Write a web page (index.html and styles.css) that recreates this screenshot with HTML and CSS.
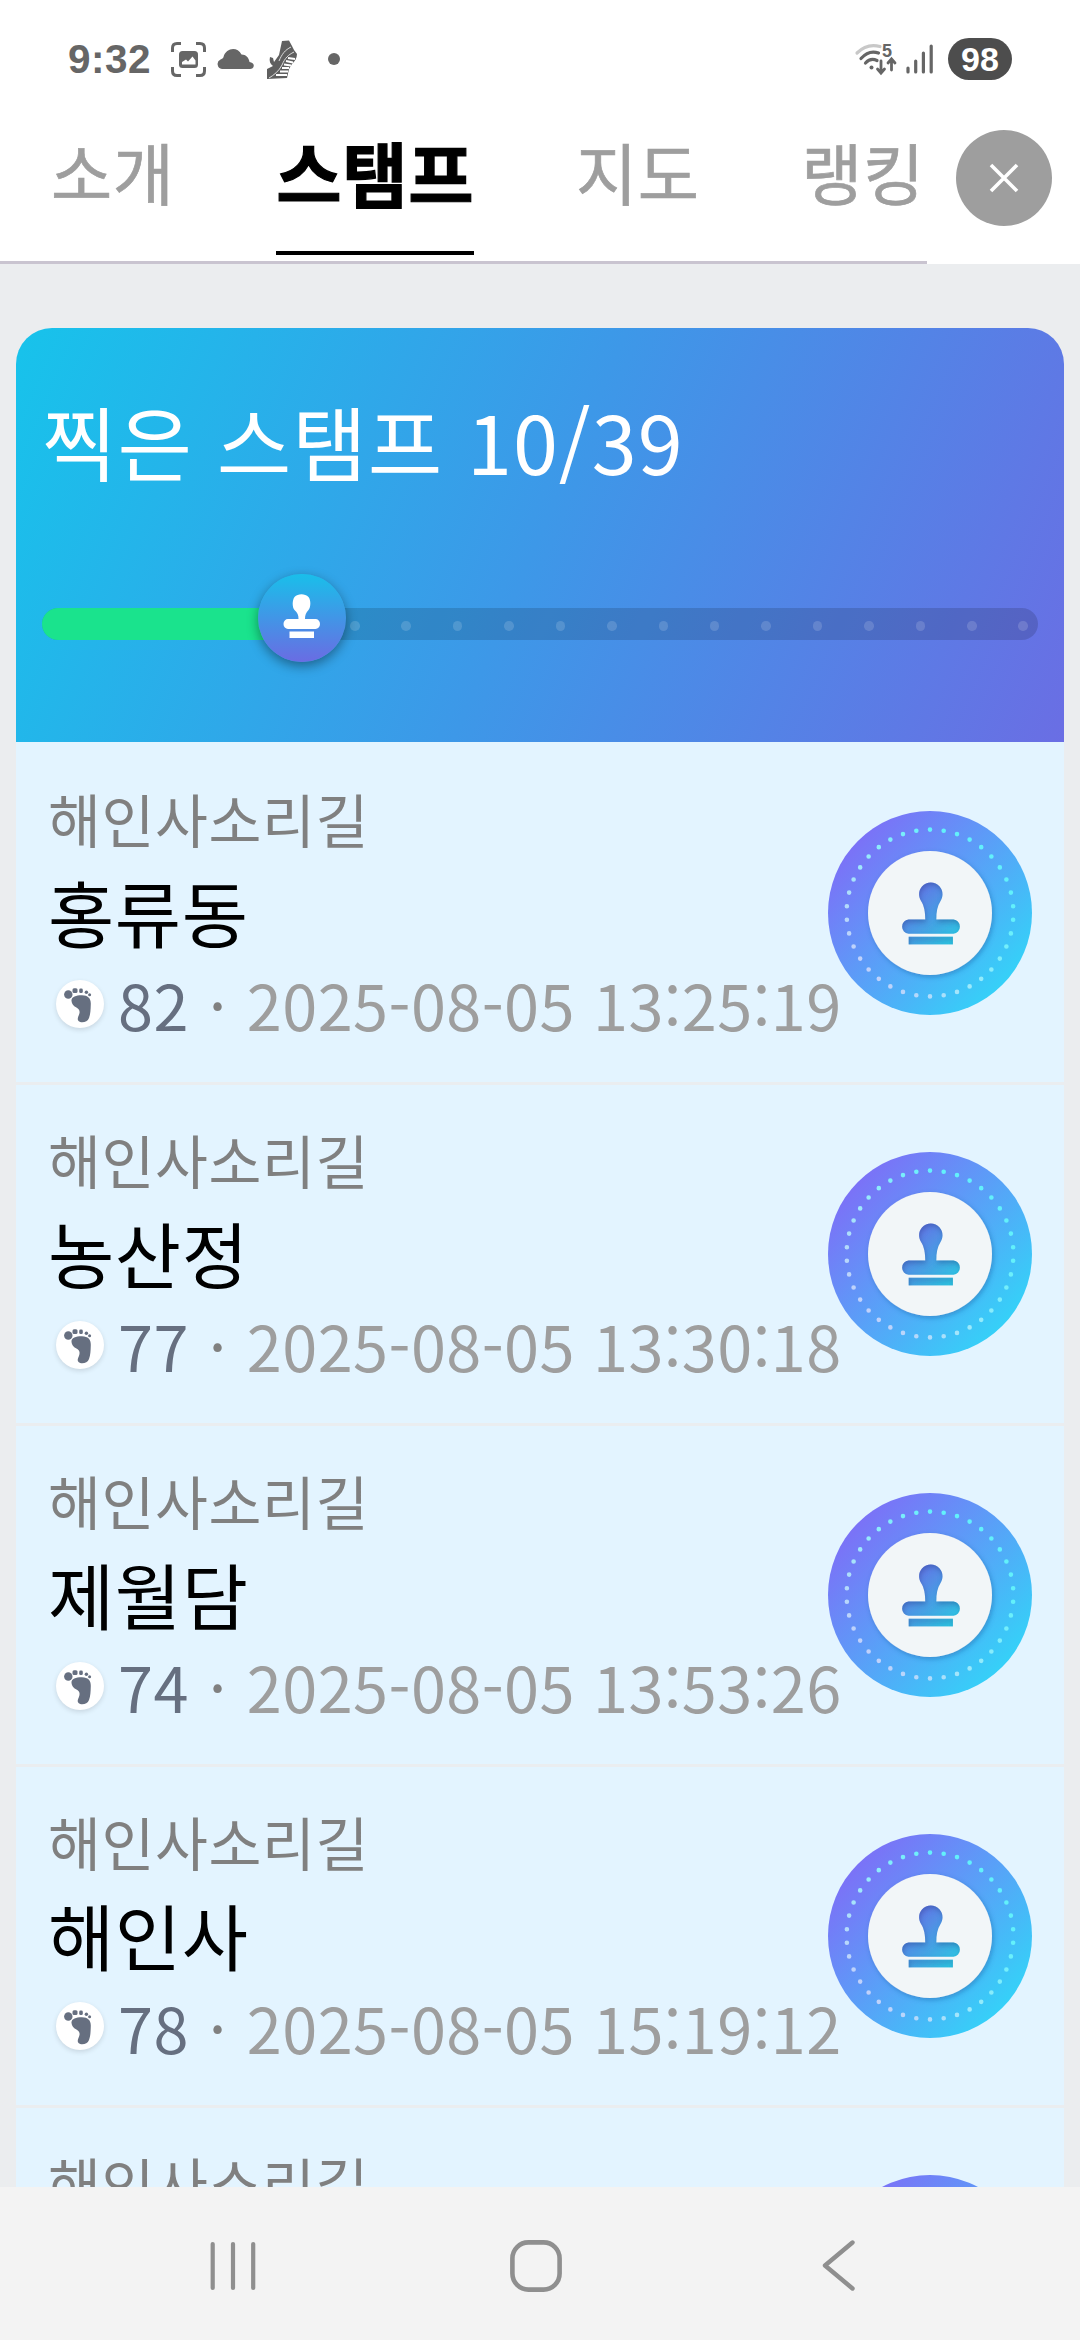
FILE: index.html
```
<!DOCTYPE html>
<html lang="ko">
<head>
<meta charset="UTF-8">
<title>스탬프</title>
<link rel="stylesheet" href="styles.css">
</head>
<body>
<svg class="defs" width="0" height="0">
    <defs>
        <linearGradient id="ring" x1="0.1" y1="0.15" x2="0.85" y2="0.85">
            <stop offset="0" stop-color="#7d6ff7"/>
            <stop offset="1" stop-color="#36d0f8"/>
        </linearGradient>
        <linearGradient id="dots" x1="0.1" y1="0.1" x2="0.7" y2="0.8">
            <stop offset="0" stop-color="#c6cdfb"/>
            <stop offset="0.5" stop-color="#9ceafb"/>
            <stop offset="1" stop-color="#62f1fb"/>
        </linearGradient>
        <linearGradient id="ink" gradientUnits="userSpaceOnUse" x1="82" y1="80" x2="126" y2="128">
            <stop offset="0" stop-color="#6573e6"/>
            <stop offset="1" stop-color="#2fc2e2"/>
        </linearGradient>
        <filter id="discShadow" x="-20%" y="-20%" width="140%" height="140%">
            <feDropShadow dx="1.5" dy="2" stdDeviation="2.5" flood-color="#1c4f96" flood-opacity="0.4"/>
        </filter>
        <filter id="inkShadow" x="-10%" y="-10%" width="120%" height="120%">
            <feOffset in="SourceAlpha" dx="1" dy="3"/>
            <feGaussianBlur stdDeviation="2.5" result="b"/>
            <feComposite in="SourceAlpha" in2="b" operator="out" result="s"/>
            <feFlood flood-color="#1f3f8c" flood-opacity="0.5"/>
            <feComposite in2="s" operator="in" result="c"/>
            <feMerge><feMergeNode in="SourceGraphic"/><feMergeNode in="c"/></feMerge>
        </filter>
    </defs>
    <symbol id="badge" viewBox="0 0 204 204">
        <circle cx="102" cy="102" r="102" fill="url(#ring)"/>
        <circle cx="102" cy="102" r="83.4" fill="none" stroke="url(#dots)" stroke-width="4.6" stroke-linecap="round" pathLength="38" stroke-dasharray="0 1" transform="rotate(-90 102 102)"/>
        <circle cx="102" cy="102" r="62" fill="#f2f6f8" filter="url(#discShadow)"/>
        <g fill="url(#ink)" filter="url(#inkShadow)">
            <path d="M97.3 109C97.3 101 96.2 95 93.2 90.3C90 85 90.6 79.4 94 75.5C98.6 70.2 107 70.2 111.6 75.5C115 79.4 115.6 85 112.4 90.3C109.4 95 108.3 101 108.3 108.5H125.5A7.2 7.2 0 0 1 125.5 122.8H80.5A7.2 7.2 0 0 1 80.5 108.5H97.3Z"/>
            <rect x="80.7" y="125.7" width="44.2" height="7.7"/>
        </g>
    </symbol>
    <symbol id="foot" viewBox="0 0 48 48">
        <path fill="#666f80" d="M15.5 21C15 16.500 21 15 26 15.200C32 15.500 35 18 34.800 24C34.600 30 34.500 34 33 38C31.500 42.500 25 43.500 22.500 41C20.500 38.500 23 36 23.500 33C24 30 22.500 28.500 20 27.200C17.500 26 15.800 24 15.500 21Z"/>
        <ellipse fill="#666f80" cx="12.300" cy="14.500" rx="4.200" ry="4.300"/>
        <rect fill="#666f80" x="16.500" y="8.300" width="5" height="4.800" rx="1.500"/>
        <rect fill="#666f80" x="23.200" y="8.500" width="3.600" height="4.600" rx="1.400"/>
        <circle fill="#666f80" cx="30.400" cy="12.300" r="1.700"/>
        <circle fill="#666f80" cx="33.600" cy="14.800" r="1.500"/>
    </symbol>
</svg>

<div class="phone">
    <div class="status">
        <span class="time">9:32</span>
        <svg class="ic-capture" width="35" height="35" viewBox="0 0 35 35">
            <path d="M1.500 10V6Q1.500 1.500 6 1.500H10M25 1.500H29Q33.500 1.500 33.500 6V10M33.500 25V29Q33.500 33.500 29 33.500H25M10 33.500H6Q1.500 33.500 1.500 29V25" fill="none" stroke="#666" stroke-width="3"/>
            <rect x="8" y="9" width="19" height="17" rx="3.500" fill="#666"/>
            <path d="M11 22.500V20L15 17.500L17 19.500L21.500 14.500L24.500 18.500V22.500Z" fill="#fff"/>
        </svg>
        <svg class="ic-cloud" width="37" height="20" viewBox="0 0 37 20">
            <path d="M5 20A5 5 0 0 1 3.500 10.500C5 9.500 6 9.500 6.500 8C9-1 20-3 24.500 5.500C29 5.500 32 9 32.500 13C35 13.300 36.800 14.500 36.800 16.800C36.500 19 35 20 33 20Z" fill="#666"/>
        </svg>
        <svg class="ic-shoe" width="32" height="39" viewBox="0 0 32 39">
            <path d="M16 1L23 .5L26 6L28 10L31 14C31 18 29 21 26 24L23 29L21 38L1 39L1 29L7 26C4 24 3 21 4 17L7 18L8 22L13 15Z" fill="#5f5f5f"/>
            <path d="M28 12C22 15 19 18 16 25C13 31 8 35 3 38M25 7C19 10 16 14 13 21" fill="none" stroke="#ddd" stroke-width="1"/>
            <path d="M22 18L29 19M20 21L27 22.500M18 24.500L25 25.500M16 28H23M14 31.500H22M10 35H21" stroke="#fff" stroke-width="1.800"/>
        </svg>
        <span class="more"></span>
        <span class="spacer"></span>
        <svg class="ic-wifi" width="42" height="34" viewBox="0 0 42 34">
            <path d="M2 11Q12 1 25 4.500" fill="none" stroke="#c8c8c8" stroke-width="3.200" stroke-linecap="round"/>
            <path d="M6 16.500Q14 7.500 23.500 11" fill="none" stroke="#666" stroke-width="3.200" stroke-linecap="round"/>
            <path d="M10.500 21Q15.500 15.500 22 18.500" fill="none" stroke="#666" stroke-width="3.200" stroke-linecap="round"/>
            <circle cx="16.500" cy="25.500" r="2" fill="#666"/>
            <path d="M26 19V30M22.500 27L26 31L29.500 27M36.500 28V18M33 21L36.500 17L40 21" fill="none" stroke="#666" stroke-width="2.800" stroke-linecap="round"/>
            <text class="wifi-gen" x="27" y="14.500">5</text>
        </svg>
        <svg class="ic-signal" width="28" height="30" viewBox="0 0 28 30">
            <path d="M2 24V28M9.700 17V28M17.400 9V28M25.200 2V28" stroke="#666" stroke-width="3.200" stroke-linecap="round"/>
        </svg>
        <span class="battery">98</span>
    </div>

    <div class="header">
        <div class="tabs">
            <a class="tab">소개</a>
            <a class="tab active">스탬프</a>
            <a class="tab">지도</a>
            <a class="tab">랭킹</a>
        </div>
        <div class="close">
            <svg width="96" height="96" viewBox="0 0 96 96">
                <circle cx="48" cy="48" r="48" fill="#9e9e9e"/>
                <path d="M35 35L61 61M61 35L35 61" stroke="#fff" stroke-width="3.600"/>
            </svg>
        </div>
    </div>

    <div class="content">
        <div class="summary">
            <div class="summary-title">찍은 스탬프 10/39</div>
            <div class="track">
                <div class="fill"></div>
                <div class="steps">
                    <i></i><i></i><i></i><i></i><i></i><i></i><i></i><i></i><i></i><i></i><i></i><i></i><i></i><i></i>
                </div>
                <div class="knob">
                    <svg width="40" height="50" viewBox="0 0 40 50">
                        <path fill="#fff" d="M16.500 29C16.500 25 15.500 22.500 12.500 20C10 17 10.200 10 12.500 7C16 3.300 23 3.300 26.500 7C29 10 29 17 26.500 20C24 22.500 23 25 23 29H33.500A4.500 5 0 0 1 33.500 39H6A4.500 5 0 0 1 6 29Z"/>
                        <rect x="7.500" y="41.500" width="24.500" height="6.500" fill="#fff"/>
                    </svg>
                </div>
            </div>
        </div>

        <div class="item">
            <div class="info">
                <div class="course">해인사소리길</div>
                <div class="name">홍류동</div>
                <div class="meta"><span class="foot"><svg width="48" height="48"><use href="#foot"/></svg></span><span class="count">82</span><span class="sep">·</span><span class="date">2025-08-05 13:25:19</span></div>
            </div>
            <svg class="badge" width="204" height="204"><use href="#badge"/></svg>
        </div>
        <div class="item">
            <div class="info">
                <div class="course">해인사소리길</div>
                <div class="name">농산정</div>
                <div class="meta"><span class="foot"><svg width="48" height="48"><use href="#foot"/></svg></span><span class="count">77</span><span class="sep">·</span><span class="date">2025-08-05 13:30:18</span></div>
            </div>
            <svg class="badge" width="204" height="204"><use href="#badge"/></svg>
        </div>
        <div class="item">
            <div class="info">
                <div class="course">해인사소리길</div>
                <div class="name">제월담</div>
                <div class="meta"><span class="foot"><svg width="48" height="48"><use href="#foot"/></svg></span><span class="count">74</span><span class="sep">·</span><span class="date">2025-08-05 13:53:26</span></div>
            </div>
            <svg class="badge" width="204" height="204"><use href="#badge"/></svg>
        </div>
        <div class="item">
            <div class="info">
                <div class="course">해인사소리길</div>
                <div class="name">해인사</div>
                <div class="meta"><span class="foot"><svg width="48" height="48"><use href="#foot"/></svg></span><span class="count">78</span><span class="sep">·</span><span class="date">2025-08-05 15:19:12</span></div>
            </div>
            <svg class="badge" width="204" height="204"><use href="#badge"/></svg>
        </div>
        <div class="item">
            <div class="info">
                <div class="course">해인사소리길</div>
            </div>
            <svg class="badge" width="204" height="204"><use href="#badge"/></svg>
        </div>
    </div>

    <div class="navbar">
        <svg width="60" height="60" viewBox="0 0 60 60"><path d="M9.700 8V52M30 8V52M50.200 8V52" stroke="#8f8f8f" stroke-width="4.200" stroke-linecap="round"/></svg>
        <svg width="60" height="60" viewBox="0 0 60 60"><rect x="6.400" y="6.400" width="47.200" height="47.200" rx="16" fill="none" stroke="#8f8f8f" stroke-width="4.600"/></svg>
        <svg width="60" height="60" viewBox="0 0 60 60"><path d="M44.500 7L17 30L44.500 53" transform="translate(0 -.5)" fill="none" stroke="#8f8f8f" stroke-width="4.400" stroke-linecap="round" stroke-linejoin="round"/></svg>
    </div>
</div>
</body>
</html>
```
FILE: styles.css
```
* {
    box-sizing: border-box;
}
body {
    margin: 0;
    background: #ebedef;
    font-family: "Noto Sans CJK KR", "Noto Sans", sans-serif;
    letter-spacing: 0.6px;
}
svg {
    display: block;
    flex: none;
}
.defs {
    position: absolute;
}
.phone {
    width: 1080px;
    height: 2340px;
    display: flex;
    flex-direction: column;
    overflow: hidden;
}

/* status bar */
.status {
    flex: none;
    height: 118px;
    padding: 0 68px;
    display: flex;
    align-items: center;
    background: #fff;
    font-family: "Liberation Sans", Arial, sans-serif;
    font-weight: bold;
    letter-spacing: 0;
}
.time {
    width: 103px;
    font-size: 40.5px;
    line-height: 46px;
    letter-spacing: 0.5px;
    color: #666;
}
.ic-cloud {
    margin-left: 11px;
}
.ic-shoe {
    margin-left: 12px;
}
.more {
    width: 12px;
    height: 12px;
    margin-left: 30px;
    border-radius: 50%;
    background: #666;
}
.spacer {
    flex: 1;
}
.ic-wifi {
    overflow: visible;
}
.wifi-gen {
    font-size: 18px;
    fill: #666;
}
.ic-signal {
    margin: 0 14px 0 9px;
}
.battery {
    width: 64px;
    height: 42px;
    border-radius: 21px;
    background: #4d4d4d;
    color: #fff;
    font-size: 34px;
    line-height: 43px;
    text-align: center;
}

/* tabs */
.header {
    flex: none;
    height: 146px;
    display: flex;
    background: #fff;
}
.tabs {
    width: 927px;
    padding-left: 51px;
    display: flex;
    gap: 101.8px;
    border-bottom: 3px solid #c9c4d0;
}
.tab {
    flex: none;
    height: 137px;
    font-size: 66.5px;
    line-height: 107px;
    color: #9e9e9e;
    white-space: nowrap;
    -webkit-text-stroke: 0.7px;
}
.tab.active {
    font-size: 71px;
    font-weight: bold;
    color: #000;
    border-bottom: 4px solid #000;
    -webkit-text-stroke: 1.2px;
}
.close {
    padding: 12px 0 0 28.5px;
}

/* stamp progress */
.content {
    flex: 1;
    min-height: 0;
    overflow: hidden;
    padding: 64px 16px 0;
}
.summary {
    height: 414px;
    padding: 52px 26px 0;
    border-radius: 36px 36px 0 0;
    background: linear-gradient(113deg, #17c3eb 0%, #3d98e8 50%, #6a6ee4 100%);
}
.summary-title {
    height: 120px;
    font-size: 81px;
    line-height: 120px;
    letter-spacing: 1px;
    color: #fff;
}
.track {
    position: relative;
    width: 996px;
    height: 32px;
    margin-top: 108px;
    border-radius: 16px;
    background: rgba(0, 0, 0, 0.14);
}
.fill {
    width: 260px;
    height: 32px;
    border-radius: 16px 0 0 16px;
    background: #1ae38d;
}
.steps {
    position: absolute;
    left: 308px;
    right: 10px;
    top: 13px;
    display: flex;
    justify-content: space-between;
}
.steps i {
    width: 9.5px;
    height: 9.5px;
    border-radius: 50%;
    background: rgba(255, 255, 255, 0.15);
}
.knob {
    position: absolute;
    left: 216px;
    top: -34px;
    width: 88px;
    height: 88px;
    display: flex;
    justify-content: center;
    padding-top: 16px;
    border-radius: 50%;
    background: linear-gradient(#19bfea, #6a6ce3);
    box-shadow: 0 4px 12px rgba(0, 0, 0, 0.4);
}

/* stamp list */
.item {
    height: 340.9px;
    padding: 29px 32px 0;
    display: flex;
    justify-content: space-between;
    background: #e3f4ff;
    border-bottom: 3px solid #eaedf0;
}
.summary + .item {
    height: 343.2px;
    padding-top: 31px;
}
.info {
    width: 770px;
    white-space: nowrap;
}
.course {
    font-size: 57.5px;
    line-height: 90px;
    color: #808080;
}
.name {
    font-size: 72px;
    line-height: 96px;
    color: #000;
}
.meta {
    display: flex;
    align-items: center;
    font-size: 63px;
    line-height: 89px;
    letter-spacing: 0.45px;
    color: #9e9e9e;
}
.meta span {
    flex: none;
}
.foot {
    width: 48px;
    height: 48px;
    margin: 0 14px 0 8px;
    border-radius: 50%;
    background: #fff;
    box-shadow: 0 2px 5px rgba(0, 0, 0, 0.12);
}
.count {
    color: #666f80;
}
.sep {
    width: 58px;
    color: #808080;
    text-align: center;
}
.badge {
    margin-top: 38px;
}

/* system navigation */
.navbar {
    flex: none;
    height: 153px;
    padding: 5px 82px 0;
    display: grid;
    grid-template-columns: 302.5px 302.5px 302.5px;
    align-items: center;
    justify-items: center;
    background: #f3f3f3;
}
```
